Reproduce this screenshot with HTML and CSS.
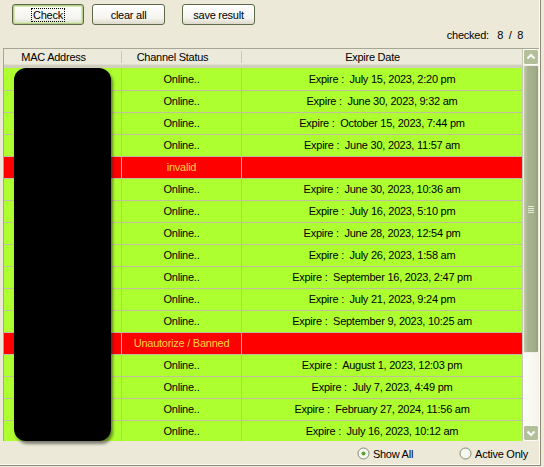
FILE: index.html
```html
<!DOCTYPE html>
<html lang="en">

<head>
    <meta charset="UTF-8">
    <meta name="viewport" content="width=device-width, initial-scale=1.0">
    <title>MAC Checker</title>
    <link rel="stylesheet" href="styles.css">
</head>

<body>
    <div class="window">
        <div class="toolbar">
            <button class="btn btnDefault"><span class="focus">Check</span></button>
            <button class="btn btnClear">clear all</button>
            <button class="btn btnSave">save result</button>
        </div>

        <div class="counter">checked:   8  /  8</div>

        <div class="list">
            <div class="grid">
                <div class="head">
                    <div class="hcell">MAC Address</div>
                    <div class="hcell">Channel Status</div>
                    <div class="hcell last">Expire Date</div>
                </div>
                <div class="rows">
                    <div class="row"><div class="cell"></div><div class="cell">Online..</div><div class="cell">Expire :  July 15, 2023, 2:20 pm</div></div>
                    <div class="row"><div class="cell"></div><div class="cell">Online..</div><div class="cell">Expire :  June 30, 2023, 9:32 am</div></div>
                    <div class="row"><div class="cell"></div><div class="cell">Online..</div><div class="cell">Expire :  October 15, 2023, 7:44 pm</div></div>
                    <div class="row"><div class="cell"></div><div class="cell">Online..</div><div class="cell">Expire :  June 30, 2023, 11:57 am</div></div>
                    <div class="row bad"><div class="cell"></div><div class="cell">invalid</div><div class="cell"></div></div>
                    <div class="row"><div class="cell"></div><div class="cell">Online..</div><div class="cell">Expire :  June 30, 2023, 10:36 am</div></div>
                    <div class="row"><div class="cell"></div><div class="cell">Online..</div><div class="cell">Expire :  July 16, 2023, 5:10 pm</div></div>
                    <div class="row"><div class="cell"></div><div class="cell">Online..</div><div class="cell">Expire :  June 28, 2023, 12:54 pm</div></div>
                    <div class="row"><div class="cell"></div><div class="cell">Online..</div><div class="cell">Expire :  July 26, 2023, 1:58 am</div></div>
                    <div class="row"><div class="cell"></div><div class="cell">Online..</div><div class="cell">Expire :  September 16, 2023, 2:47 pm</div></div>
                    <div class="row"><div class="cell"></div><div class="cell">Online..</div><div class="cell">Expire :  July 21, 2023, 9:24 pm</div></div>
                    <div class="row"><div class="cell"></div><div class="cell">Online..</div><div class="cell">Expire :  September 9, 2023, 10:25 am</div></div>
                    <div class="row bad"><div class="cell"></div><div class="cell">Unautorize / Banned</div><div class="cell"></div></div>
                    <div class="row"><div class="cell"></div><div class="cell">Online..</div><div class="cell">Expire :  August 1, 2023, 12:03 pm</div></div>
                    <div class="row"><div class="cell"></div><div class="cell">Online..</div><div class="cell">Expire :  July 7, 2023, 4:49 pm</div></div>
                    <div class="row"><div class="cell"></div><div class="cell">Online..</div><div class="cell">Expire :  February 27, 2024, 11:56 am</div></div>
                    <div class="row"><div class="cell"></div><div class="cell">Online..</div><div class="cell">Expire :  July 16, 2023, 10:12 am</div></div>
                </div>
            </div>

            <div class="scrollbar">
                <svg class="arrow" width="16" height="16" viewBox="0 0 16 16">
                    <rect x="0.5" y="0.5" width="15" height="15" rx="2" fill="#b3bf98" stroke="#fbfcf6"/>
                    <polyline points="4.5,9.5 8,6 11.5,9.5" fill="none" stroke="#fff" stroke-width="2"/>
                </svg>
                <div class="thumb"><span class="grip"></span></div>
                <div class="track"></div>
                <svg class="arrow" width="16" height="16" viewBox="0 0 16 16">
                    <rect x="0.5" y="0.5" width="15" height="15" rx="2" fill="#b3bf98" stroke="#fbfcf6"/>
                    <polyline points="4.5,6.5 8,10 11.5,6.5" fill="none" stroke="#fff" stroke-width="2"/>
                </svg>
            </div>
        </div>

        <div class="filters">
            <label class="radio">
                <svg width="13" height="13" viewBox="0 0 13 13">
                    <circle cx="6.5" cy="6.5" r="5.5" fill="#f7f7f2" stroke="#7f8a72"/>
                    <circle cx="6.5" cy="6.5" r="2" fill="#5aa03a"/>
                </svg>
                Show All
            </label>
            <label class="radio">
                <svg width="13" height="13" viewBox="0 0 13 13">
                    <circle cx="6.5" cy="6.5" r="5.5" fill="#f7f7f2" stroke="#7f8a72"/>
                </svg>
                Active Only
            </label>
        </div>

        <div class="redact"></div>
    </div>
</body>

</html>
```
FILE: styles.css
```css
* {
    margin: 0;
    box-sizing: border-box;
}

body {
    background: #ECE9D8;
    font-family: "Liberation Sans", Arial, sans-serif;
    font-size: 11px;
    letter-spacing: -0.25px;
    color: #000;
}

.window {
    position: relative;
    width: 541px;
    height: 466px;
    border-right: 1px solid #8e8c78;
    border-bottom: 1px solid #8e8c78;
    box-shadow: inset -1px -1px 0 #fbfbf5;
}

.toolbar {
    display: flex;
    padding: 4px 0 0 12px;
}

.btn {
    height: 21px;
    font: inherit;
    letter-spacing: inherit;
    border: 1px solid #5d6849;
    border-radius: 3px;
    background: linear-gradient(#ffffff, #f4f3ee 70%, #dcd9ca);
    padding: 0;
}

.btnDefault {
    width: 72px;
    box-shadow: inset 0 0 0 1px #b6d08c, inset 0 0 0 2px #d6e6b6;
}

.btnClear {
    width: 73px;
    margin-left: 8px;
}

.btnSave {
    width: 73px;
    margin-left: 17px;
}

.focus {
    outline: 1px dotted #000;
    padding: 0 1px;
}

.counter {
    margin-top: 4px;
    height: 13px;
    line-height: 13px;
    padding-right: 17px;
    text-align: right;
    white-space: pre;
}

.list {
    display: flex;
    margin: 6px 0 0 3px;
    width: 536px;
    height: 393px;
    border-top: 1px solid #a7a695;
    border-left: 1px solid #a7a695;
    overflow: hidden;
}

.grid {
    width: 519px;
    border-right: 1px solid #c8c6b6;
}

.head {
    display: grid;
    grid-template-columns: 118px 120px 1fr;
    height: 19px;
    background: #EBEADB;
    border-bottom: 3px solid #d2cebd;
    box-shadow: inset 0 -1px 0 #e2dfcf;
}

.hcell {
    position: relative;
    text-align: center;
    line-height: 15px;
    padding: 1px 19px 0 0;
}

.hcell::after {
    content: "";
    position: absolute;
    right: 0;
    top: 2px;
    bottom: 2px;
    width: 1px;
    background: #cbc7b6;
}

.hcell.last::after {
    display: none;
}

.row {
    display: grid;
    grid-template-columns: 118px 120px 1fr;
    height: 22px;
    background: #ADFF2F;
}

.cell {
    border-right: 1px solid #c0bf9e;
    border-bottom: 1px solid #c0bf9e;
    text-align: center;
    line-height: 22px;
    white-space: pre;
}

.cell:last-child {
    border-right: none;
}

.bad {
    background: #FF0000;
    color: #ffd23a;
}

.scrollbar {
    display: flex;
    flex-direction: column;
    width: 16px;
    background: #f6f5ee;
}

.arrow {
    display: block;
    flex: none;
}

.thumb {
    height: 288px;
    border: 1px solid #eef0e4;
    border-radius: 2px;
    background: linear-gradient(90deg, #c1c9ab, #a6b18d 30%, #a2ad88 80%, #939e78);
    display: flex;
    align-items: center;
    justify-content: center;
}

.grip {
    width: 6px;
    height: 7px;
    background: repeating-linear-gradient(#e6ead9 0 1px, transparent 1px 2px);
}

.track {
    flex: 1;
    background: linear-gradient(90deg, #fdfdf8, #f5f4ea);
}

.filters {
    display: flex;
    justify-content: flex-end;
    align-items: center;
    height: 24px;
    padding: 1px 12px 0 0;
    gap: 46px;
}

.radio {
    display: flex;
    align-items: center;
    gap: 3px;
}

.redact {
    position: absolute;
    left: 14px;
    top: 68px;
    width: 97px;
    height: 373px;
    background: #000;
    border-radius: 12px;
    box-shadow: 2px 3px 3px rgba(40, 40, 30, 0.55);
}
```
